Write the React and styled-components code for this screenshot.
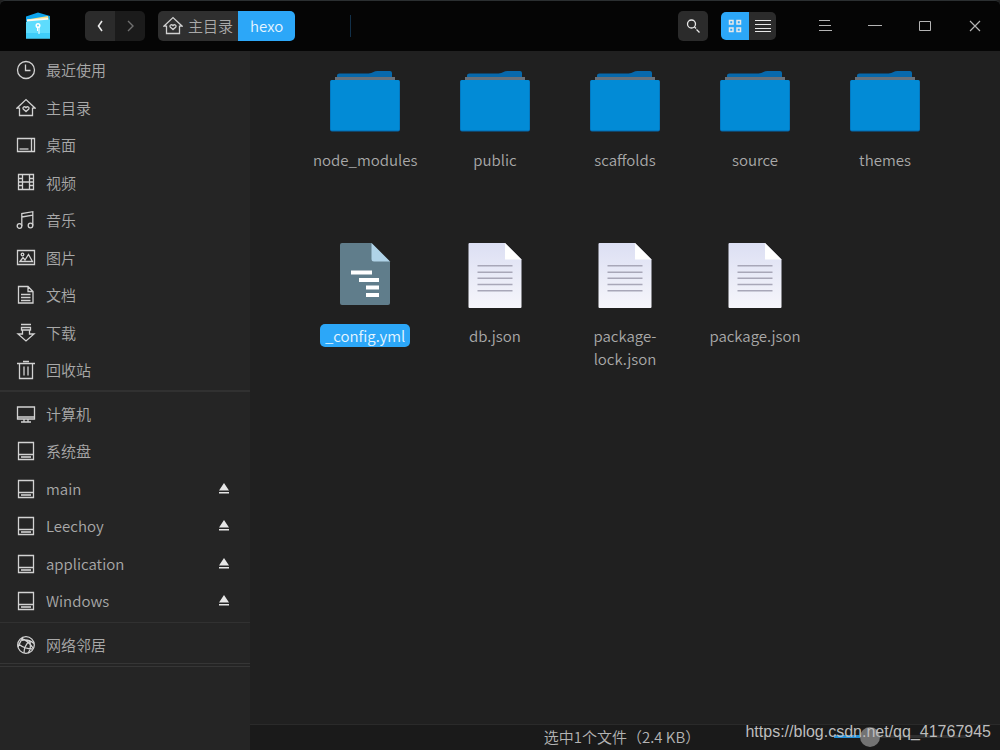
import React, { useState } from "react";
import styled, { createGlobalStyle, css } from "styled-components";

const Global = createGlobalStyle`
  *, *::before, *::after { box-sizing: border-box; }
  body { margin: 0; background: #252525; }
  button, input { font: inherit; color: inherit; }
  ul { list-style: none; margin: 0; padding: 0; }
`;

const Window = styled.div`
  position: relative;
  display: flex;
  flex-direction: column;
  min-height: 100vh;
  overflow: hidden;
  background: #202020;
  color: #a9a9a9;
  font: 350 15px/22px "Noto Sans CJK SC", "Noto Sans", sans-serif;
`;

const TitleBar = styled.header`
  display: flex;
  align-items: center;
  height: 51px;
  padding-left: 22px;
  background: #050505;
  border-top: 1px solid #2b2f31;
  border-radius: 5px 5px 0 0;
`;

const Logo = styled.svg`
  width: 32px;
  height: 32px;
  margin-right: 31px;
`;

const PlainButton = styled.button`
  display: flex;
  align-items: center;
  justify-content: center;
  padding: 0;
  border: 0;
  background: none;
  svg { display: block; }
`;

const ButtonGroup = styled.div`
  display: flex;
  height: ${(p) => p.$height || 30}px;
  margin-right: ${(p) => p.$after || 0}px;
  overflow: hidden;
  border-radius: 5px;
`;

const GroupButton = styled(PlainButton)`
  width: ${(p) => p.$width}px;
  color: ${(p) => (p.$dim ? "#707070" : "#e8e8e8")};
  background: ${(p) => (p.$active ? "#2ca7f8" : p.$dim ? "#1b1b1b" : "#2b2b2b")};
`;

const Crumbs = styled.nav`
  display: flex;
  height: 30px;
  overflow: hidden;
  border-radius: 5px;
`;

const Crumb = styled.a`
  display: flex;
  align-items: center;
  gap: 5px;
  padding: 0 ${(p) => (p.$current ? 12 : 5)}px;
  color: ${(p) => (p.$current ? "#e6f5ff" : "#a9a9a9")};
  background: ${(p) => (p.$current ? "#2ca7f8" : "#2f2f2f")};
  text-decoration: none;
  svg { color: #d0d0d0; }
`;

const AddressEnd = styled.div`
  flex: 1;
  height: 22px;
  margin-left: 55px;
  border-left: 1px solid #123049;
`;

const WindowButtons = styled.div`
  display: flex;
  color: #b4b4b4;
`;

const WindowButton = styled(PlainButton)`
  width: 50px;
  height: 50px;
`;

const Body = styled.div`
  display: flex;
  flex: 1;
`;

const Sidebar = styled.nav`
  flex: 0 0 250px;
  background: #252525;
`;

const PlaceItem = styled.li`
  display: flex;
  align-items: center;
  height: 38px;
  padding: 0 19px 0 16px;
`;

const PlaceList = styled.ul`
  padding: ${(p) => p.$pad || "3px 0 2px"};
  border-bottom: ${(p) => p.$line || "1px solid #313131"};
  ${PlaceItem}:nth-child(${(p) => p.$tight || "odd"}) { height: 37px; }
`;

const PlaceLink = styled.a`
  display: flex;
  flex: 1;
  align-items: center;
  gap: 10px;
  color: inherit;
  text-decoration: none;
  svg { color: #d2d2d2; }
`;

const Eject = styled(PlainButton)`
  width: 14px;
  height: 14px;
  color: #e6e6e6;
`;

const Main = styled.main`
  display: flex;
  flex: 1;
  flex-direction: column;
  min-width: 0;
`;

const FileGrid = styled.ul`
  display: grid;
  flex: 1;
  grid-template-columns: repeat(auto-fill, 130px);
  grid-auto-rows: 176px;
  align-content: start;
  justify-content: center;
`;

const FileItem = styled.li`
  display: flex;
  flex-direction: column;
  align-items: center;
`;

const FileArt = styled.svg`
  flex: none;
  width: 80px;
  height: 80px;
  margin: 10px 0 7px;
`;

const FileName = styled.span`
  max-width: 114px;
  padding: 0 5px;
  border-radius: 5px;
  line-height: 23px;
  text-align: center;
  ${(p) => p.$selected && css`
    color: #e6f5ff;
    background: #2ca7f8;
  `}
`;

const StatusBar = styled.footer`
  display: grid;
  grid-template-columns: 1fr auto 1fr;
  align-items: center;
  height: 26px;
  padding: 0 34px 2px 28px;
  background: #1a1a1a;
  border-top: 1px solid #2a2a2a;
`;

const StatusText = styled.span`
  grid-column: 2;
  color: #b4b4b4;
`;

const ZoomSlider = styled.input`
  justify-self: end;
  width: 132px;
  height: 20px;
  margin: 0;
  appearance: none;
  background: linear-gradient(to right, #2490d8 35px, #303030 35px) center / 100% 3px no-repeat;
  &::-webkit-slider-thumb {
    appearance: none;
    width: 20px;
    height: 20px;
    border-radius: 50%;
    background: #737373;
  }
`;

const Watermark = styled.span`
  position: absolute;
  right: 9px;
  bottom: 8px;
  color: #bdbdbd;
  font: 16px/20px "Liberation Sans", Arial, sans-serif;
  pointer-events: none;
`;

const shapes = {
  recent: <><circle cx="10" cy="10" r="8.5" /><path d="M9.5 4.5v6h5" /></>,
  home: <><path d="M.8 10.2 10 1.6l9.2 8.6H16.500v7.300h-13v-7.300z" /><path d="M10 13.600 7.200 11c-1-1.600 1.300-3.200 2.800-1.300 1.500-1.900 3.800-.3 2.800 1.300z" /></>,
  desktop: <><path d="M1.500 3.500h17v13h-17zM15.500 3.500v13" /><path d="M3.500 14h9" /></>,
  video: <path d="M2.500 1.500h15v15h-15zM6.500 1.500v15M13.500 1.500v15M6.500 9h7M2.500 5.500h4M2.500 9h4M2.500 12.500h4M13.500 5.500h4M13.500 9h4M13.500 12.500h4" />,
  music: <><circle cx="3.500" cy="16" r="2.300" /><circle cx="14.500" cy="15.500" r="2.300" /><path d="M5.800 16V3.500l11-1.800v13.800M5.800 7l11-1.800" /></>,
  picture: <><path d="M1.500 2.500h17v14h-17z" /><circle cx="6.500" cy="6.500" r="1.300" /><path d="m4 13.500 3-4 2 2.500 3.500-5.500 4 7z" /></>,
  document: <><path d="M2.500 1.500h9.500l5 5v11.500h-14.500zM12 1.500v5h5M5 9.500h9.500M5 12.500h9.500M5 15.500h9.500" /></>,
  download: <path d="M5 1.500h10M5.500 4.500h9v2.500h-9zM6.500 7v4h-4.500l8 7 8-7h-4.500v-4" />,
  trash: <path d="M1 3.500h18M7 1.500h6M3.500 3.500v15h13v-15M8 6.500v9M12 6.500v9" />,
  computer: <path d="M1.500 3h17v12h-17zM1.500 13h17M8 15v2.500M12 15v2.500M5 18h10" />,
  disk: <><path d="M2.500 1.500h15v17h-15zM2.500 13.500h15" /><path d="M5 16h10" strokeWidth="1.600" /></>,
  network: <><circle cx="10" cy="10" r="8.300" /><path d="M5 3.500c5 1 9 5 12.500 10M7 2c-2 4-4 7-5 10M2.500 9c5 4 9 5 14 5M6 5.500C11 4 14 5 18 8.500M8 18c0-5 2-9 6-12.500M12 18c2-2 3-6 2-12" /></>,
};

const Glyph = ({ name }) => (
  <svg width="20" height="20" viewBox="0 0 20 20" fill="none" stroke="currentColor" strokeWidth="1.300" aria-hidden="true">
    {shapes[name]}
  </svg>
);

const folderArt = (
  <>
    <path d="M12 14.500q0-2 2.500-2h29q3-.5 5-1.500 1.500-1 4-1H65q2 0 2 2v6H12z" fill="#0769ac" />
    <path d="M10 16h60v5H10z" fill="#68717b" />
    <rect x="5" y="19" width="70" height="51.500" rx="2" fill="#0567ac" />
    <rect x="5.500" y="19" width="69" height="50.500" rx="1.500" fill="#028bd6" />
  </>
);

const configArt = (
  <>
    <path d="M17 6h29.500L65 24.500V66q0 2-2 2H17q-2 0-2-2V8q0-2 2-2z" fill="#607d8b" />
    <path d="M46.500 6 65 24.500H49q-2.500 0-2.500-2.500z" fill="#b0d3e8" />
    <path d="M26 33.500h21v4H26zM34 41h20v4H34zM41 48.500h13v4H41zM41 56h13v4H41z" fill="#fff" />
  </>
);

const textArt = (
  <>
    <defs>
      <linearGradient id="paper" x1="0" y1="0" x2="0" y2="1">
        <stop offset="0" stopColor="#dcdff3" />
        <stop offset="1" stopColor="#f6f6fb" />
      </linearGradient>
    </defs>
    <path d="M14.500 6H50l16.500 16.500V70q0 1-1 1h-51q-1 0-1-1V7q0-1 1-1z" fill="url(#paper)" />
    <path d="M50 6l16.500 16.500H50z" fill="#fff" />
    <path d="M22.500 28.800h35M22.500 35.200h35M22.500 41.300h35M22.500 47.500h35M22.500 53.800h35" stroke="#a8a7b8" strokeWidth="1.400" />
  </>
);

const art = { folder: folderArt, config: configArt, text: textArt };

const places = [
  ["recent", "最近使用"], ["home", "主目录"], ["desktop", "桌面"],
  ["video", "视频"], ["music", "音乐"], ["picture", "图片"],
  ["document", "文档"], ["download", "下载"], ["trash", "回收站"],
];
const drives = [
  ["computer", "计算机"], ["disk", "系统盘"], ["disk", "main", true],
  ["disk", "Leechoy", true], ["disk", "application", true], ["disk", "Windows", true],
];
const network = [["network", "网络邻居"]];

const files = [
  ["folder", "node_modules"], ["folder", "public"], ["folder", "scaffolds"],
  ["folder", "source"], ["folder", "themes"], ["config", "_config.yml"],
  ["text", "db.json"], ["text", "package-lock.json"], ["text", "package.json"],
];

const Places = ({ items, ...rest }) => (
  <PlaceList {...rest}>
    {items.map(([icon, label, removable]) => (
      <PlaceItem key={label}>
        <PlaceLink href="#"><Glyph name={icon} />{label}</PlaceLink>
        {removable && (
          <Eject aria-label={`Eject ${label}`}>
            <svg width="12" height="12" viewBox="0 0 12 12" fill="currentColor"><path d="M6 0l5 7.500H1zM1 9h10v1.500H1z" /></svg>
          </Eject>
        )}
      </PlaceItem>
    ))}
  </PlaceList>
);

export default function App() {
  const [selected, setSelected] = useState("_config.yml");
  return (
    <Window>
      <Global />
      <TitleBar>
        <Logo viewBox="0 0 32 32" aria-hidden="true">
          <path d="M4 6.500 16 2.500l12 3.500v5H4z" fill="#0da5ee" />
          <path d="M5 9.500 26 6l1 5H5z" fill="#f7e08a" />
          <path d="M5 9.500 26 8v4H5z" fill="#fdf9ec" />
          <path d="M4 11.500 28 9.500V28.500H4z" fill="#5edcfd" />
          <path d="M4 23h24v5.500H4z" fill="#3fcdf9" />
          <circle cx="16" cy="15.500" r="1.800" fill="none" stroke="#fff" strokeWidth="1.500" />
          <path d="M15.500 17v4M17 17v7" stroke="#fff" />
        </Logo>
        <ButtonGroup $after={13}>
          <GroupButton $width={30} aria-label="Back">
            <svg width="12" height="14" viewBox="0 0 12 14" fill="none" stroke="currentColor" strokeWidth="1.600"><path d="M8 2 4.500 7 8 12" /></svg>
          </GroupButton>
          <GroupButton $width={30} $dim aria-label="Forward">
            <svg width="12" height="14" viewBox="0 0 12 14" fill="none" stroke="currentColor" strokeWidth="1.400"><path d="m4 2 5 5-5 5" /></svg>
          </GroupButton>
        </ButtonGroup>
        <Crumbs aria-label="Path">
          <Crumb href="#"><Glyph name="home" />主目录</Crumb>
          <Crumb href="#" $current aria-current="page">hexo</Crumb>
        </Crumbs>
        <AddressEnd />
        <ButtonGroup $after={13}>
          <GroupButton $width={30} aria-label="Search">
            <svg width="16" height="16" viewBox="0 0 16 16" fill="none" stroke="currentColor" strokeWidth="1.300"><circle cx="6.500" cy="6" r="4" /><path d="m9.500 9 1.500 1.500M11.500 11.500l3 3" /></svg>
          </GroupButton>
        </ButtonGroup>
        <ButtonGroup $height={28} $after={24}>
          <GroupButton $width={28} $active aria-label="Icon view">
            <svg width="16" height="16" viewBox="0 0 16 16" fill="none" stroke="currentColor" strokeWidth="1.500"><path d="M2.500 2.500H6V6H2.500zM10 2.500h3.500V6H10zM2.500 10H6v3.500H2.500zM10 10h3.500v3.500H10z" /></svg>
          </GroupButton>
          <GroupButton $width={27} aria-label="List view">
            <svg width="16" height="16" viewBox="0 0 16 16" stroke="currentColor"><path d="M0 2.500h16M0 6.500h16M0 10.500h16M0 13.500h16" /></svg>
          </GroupButton>
        </ButtonGroup>
        <WindowButtons>
          <WindowButton aria-label="Menu">
            <svg width="14" height="14" viewBox="0 0 14 14" stroke="currentColor"><path d="M1 1.500h11M1 6.500h12M1 11.500h13" /></svg>
          </WindowButton>
          <WindowButton aria-label="Minimize">
            <svg width="14" height="14" viewBox="0 0 14 14" stroke="currentColor"><path d="M0 6.500h14" /></svg>
          </WindowButton>
          <WindowButton aria-label="Maximize">
            <svg width="14" height="14" viewBox="0 0 14 14" fill="none" stroke="currentColor"><path d="M1.500 2.500h11v9h-11z" /></svg>
          </WindowButton>
          <WindowButton aria-label="Close">
            <svg width="14" height="14" viewBox="0 0 14 14" stroke="currentColor" strokeWidth="1.200"><path d="m2 2 10 10M12 2 2 12" /></svg>
          </WindowButton>
        </WindowButtons>
      </TitleBar>
      <Body>
        <Sidebar>
          <Places items={places} $tight="even" $pad="0 0 1px" $line="2px solid #313131" />
          <Places items={drives} />
          <Places items={network} $pad="3px 0 0" $line="4px double #363636" />
        </Sidebar>
        <Main>
          <FileGrid>
            {files.map(([kind, name]) => (
              <FileItem key={name} onClick={() => setSelected(name)}>
                <FileArt viewBox="0 0 80 80" aria-hidden="true">{art[kind]}</FileArt>
                <FileName $selected={selected === name}>{name}</FileName>
              </FileItem>
            ))}
          </FileGrid>
          <StatusBar>
            <StatusText>选中1个文件（2.4 KB）</StatusText>
            <ZoomSlider type="range" min="0" max="100" defaultValue="23" aria-label="Icon size" />
          </StatusBar>
        </Main>
      </Body>
      <Watermark>https://blog.csdn.net/qq_41767945</Watermark>
    </Window>
  );
}
